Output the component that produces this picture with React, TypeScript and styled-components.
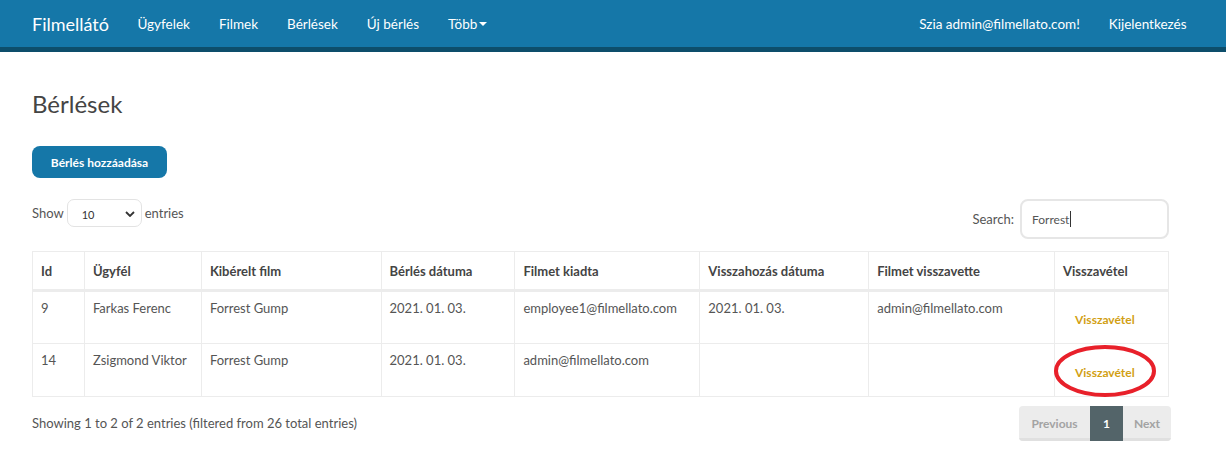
import React from "react";
import styled, { createGlobalStyle } from "styled-components";

const Global = createGlobalStyle`
  html, body { margin: 0; padding: 0; background: #fff; }
  body { font-family: Lato, "Noto Sans", sans-serif; color: #555; font-size: 13px; }
  * { box-sizing: border-box; }
`;

const Nav = styled.nav`
  height: 52px;
  background: #1577a8;
  border-bottom: 5px solid #0d4e6b;
  display: flex;
  align-items: center;
  padding: 0 25px 0 32px;
  color: #fff;
`;

const Brand = styled.span`
  font-size: 18px;
  margin-right: 14px;
`;

const NavLink = styled.span`
  font-size: 13.5px;
  padding: 0 14.5px;
  display: flex;
  align-items: center;
  gap: 2px;
`;

const Spacer = styled.div`
  flex: 1;
`;

const Main = styled.main`
  padding: 38px 32px 0 32px;
  width: 1201px;
`;

const Title = styled.h1`
  margin: 0;
  font-size: 24px;
  font-weight: 400;
  color: #444;
  line-height: 28px;
`;

const PrimaryButton = styled.button`
  margin-top: 28px;
  width: 135px;
  height: 32px;
  border: none;
  border-radius: 8px;
  background: #1577a8;
  color: #fff;
  font-family: inherit;
  font-weight: 700;
  font-size: 12px;
  display: block;
`;

const Controls = styled.div`
  margin-top: 21px;
  display: flex;
  justify-content: space-between;
  align-items: flex-start;
`;

const Length = styled.label`
  display: flex;
  align-items: center;
  gap: 3px;
  height: 28px;
`;

const SelectBox = styled.div`
  width: 75px;
  height: 28px;
  border: 1px solid #e3e3e3;
  border-radius: 7px;
  display: flex;
  align-items: center;
  justify-content: space-between;
  padding: 2px 6px 0 14px;
  font-size: 11px;
  color: #333;
`;

const SearchWrap = styled.label`
  display: flex;
  align-items: center;
  gap: 6px;
`;

const SearchInput = styled.div`
  width: 149px;
  height: 40px;
  border: 2px solid #e6e6e6;
  border-radius: 8px;
  display: flex;
  align-items: center;
  padding-left: 10px;
  font-size: 12px;
  color: #555;
`;

const Caret = styled.span`
  display: inline-block;
  width: 1px;
  height: 16px;
  background: #333;
  margin-left: 1px;
`;

const Table = styled.table`
  margin-top: 12px;
  width: 1137px;
  border-collapse: collapse;
`;

const Th = styled.th<{ w: number }>`
  width: ${(p) => p.w}px;
  text-align: left;
  font-weight: 700;
  color: #444;
  height: 39px;
  padding: 0 8px;
  border: 1px solid #ececec;
  border-bottom: 3px solid #ececec;
  white-space: nowrap;
`;

const Td = styled.td`
  vertical-align: top;
  padding: 8px 8px 0 8px;
  height: 53px;
  border: 1px solid #ececec;
  color: #555;
  white-space: nowrap;
`;

const ActionTd = styled(Td)`
  vertical-align: middle;
  padding: 0 8px;
  position: relative;
`;

const LinkButton = styled.button`
  background: none;
  border: none;
  color: #d29f14;
  font-family: inherit;
  font-weight: 700;
  font-size: 12px;
  padding: 4px 12px 0 12px;
`;

const Footer = styled.div`
  margin-top: 9px;
  display: flex;
  justify-content: space-between;
  align-items: flex-start;
`;

const Info = styled.div`
  padding-top: 9px;
`;

const Pager = styled.div`
  display: flex;
  border-radius: 4px;
  overflow: hidden;
  margin-right: -2px;
`;

const PageBtn = styled.span<{ active?: boolean; w: number }>`
  width: ${(p) => p.w}px;
  height: 35px;
  display: flex;
  align-items: center;
  justify-content: center;
  font-size: 12px;
  font-weight: 700;
  background: ${(p) => (p.active ? "#536469" : "#ececec")};
  color: ${(p) => (p.active ? "#fff" : "#a3a3a3")};
  border-bottom: 3px solid ${(p) => (p.active ? "#536469" : "#e0e0e0")};
  padding-top: 3px;
`;

const Annotation = styled.svg`
  position: absolute;
  left: -2px;
  top: -1px;
  pointer-events: none;
`;

const rows = [
  ["9", "Farkas Ferenc", "Forrest Gump", "2021. 01. 03.", "employee1@filmellato.com", "2021. 01. 03.", "admin@filmellato.com"],
  ["14", "Zsigmond Viktor", "Forrest Gump", "2021. 01. 03.", "admin@filmellato.com", "", ""],
];

const cols: [string, number][] = [
  ["Id", 52],
  ["Ügyfél", 117],
  ["Kibérelt film", 180],
  ["Bérlés dátuma", 134],
  ["Filmet kiadta", 185],
  ["Visszahozás dátuma", 169],
  ["Filmet visszavette", 186],
  ["Visszavétel", 114],
];

export default function App() {
  return (
    <>
      <Global />
      <Nav>
        <Brand>Filmellátó</Brand>
        <NavLink>Ügyfelek</NavLink>
        <NavLink>Filmek</NavLink>
        <NavLink>Bérlések</NavLink>
        <NavLink>Új bérlés</NavLink>
        <NavLink>
          Több
          <svg width="8" height="4" viewBox="0 0 8 4">
            <path d="M0 0h8L4 4z" fill="#fff" />
          </svg>
        </NavLink>
        <Spacer />
        <NavLink>Szia admin@filmellato.com!</NavLink>
        <NavLink>Kijelentkezés</NavLink>
      </Nav>
      <Main>
        <Title>Bérlések</Title>
        <PrimaryButton>Bérlés hozzáadása</PrimaryButton>
        <Controls>
          <Length>
            Show
            <SelectBox>
              <span>10</span>
              <svg width="10" height="6" viewBox="0 0 10 6">
                <path d="M1 1l4 4 4-4" stroke="#333" strokeWidth="1.8" fill="none" />
              </svg>
            </SelectBox>
            entries
          </Length>
          <SearchWrap>
            Search:
            <SearchInput>
              Forrest
              <Caret />
            </SearchInput>
          </SearchWrap>
        </Controls>
        <Table>
          <thead>
            <tr>
              {cols.map(([c, w]) => (
                <Th key={c} w={w}>
                  {c}
                </Th>
              ))}
            </tr>
          </thead>
          <tbody>
            {rows.map((r, ri) => (
              <tr key={r[0]}>
                {r.map((v, i) => (
                  <Td key={i}>{v}</Td>
                ))}
                <ActionTd>
                  <LinkButton>Visszavétel</LinkButton>
                  {ri === 1 && (
                    <Annotation width="106" height="56" viewBox="0 0 106 56">
                      <ellipse cx="52" cy="28" rx="49" ry="24" fill="none" stroke="#e8202a" strokeWidth="4" />
                    </Annotation>
                  )}
                </ActionTd>
              </tr>
            ))}
          </tbody>
        </Table>
        <Footer>
          <Info>Showing 1 to 2 of 2 entries (filtered from 26 total entries)</Info>
          <Pager>
            <PageBtn w={71}>Previous</PageBtn>
            <PageBtn w={33} active>
              1
            </PageBtn>
            <PageBtn w={48}>Next</PageBtn>
          </Pager>
        </Footer>
      </Main>
    </>
  );
}
